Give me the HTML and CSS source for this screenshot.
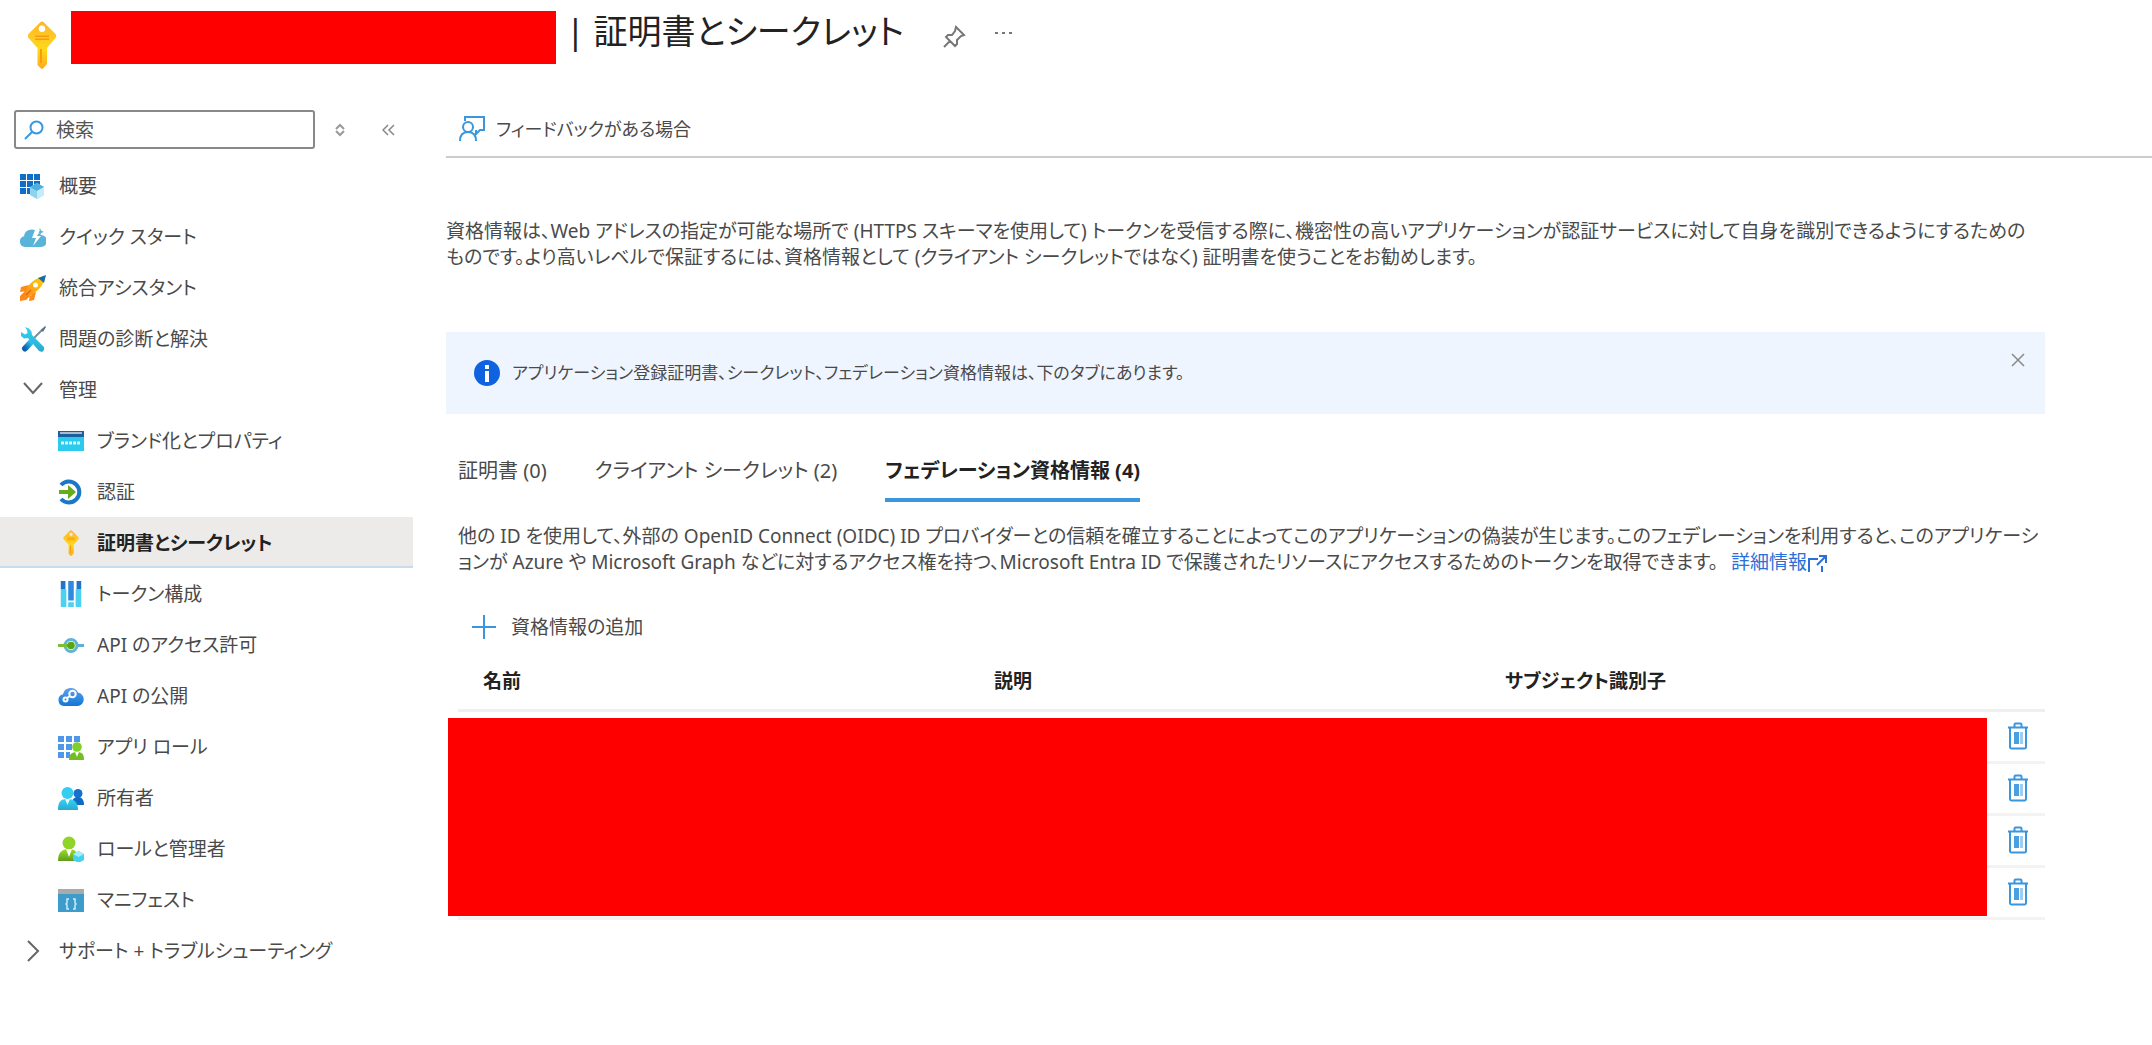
FILE: index.html
```html
<!DOCTYPE html>
<html lang="ja">
<head>
  <meta charset="UTF-8">
  <meta name="viewport" content="width=device-width, initial-scale=1.0">
  <title>証明書とシークレット</title>
  <link rel="stylesheet" href="styles.css">
</head>
<body>

  <!-- Shared icons and gradients -->
  <svg class="defs" aria-hidden="true">
    <defs>
      <linearGradient id="gold" x1="0" y1="0" x2="0" y2="1">
        <stop offset="0" stop-color="#ffb52b" />
        <stop offset="0.6" stop-color="#ffd91a" />
        <stop offset="1" stop-color="#ffab1a" />
      </linearGradient>
      <linearGradient id="blue" x1="0" y1="0" x2="0" y2="1">
        <stop offset="0" stop-color="#5ea0ef" />
        <stop offset="1" stop-color="#0f78d4" />
      </linearGradient>
      <linearGradient id="cyan" x1="0" y1="0" x2="0" y2="1">
        <stop offset="0" stop-color="#32d4f5" />
        <stop offset="1" stop-color="#2aa9cf" />
      </linearGradient>
      <linearGradient id="green" x1="0" y1="0" x2="0" y2="1">
        <stop offset="0" stop-color="#9be02a" />
        <stop offset="1" stop-color="#5e9d1c" />
      </linearGradient>
      <linearGradient id="tool" x1="1" y1="0" x2="0" y2="1">
        <stop offset="0" stop-color="#32d4f5" />
        <stop offset="1" stop-color="#0b62b0" />
      </linearGradient>
      <linearGradient id="fire" x1="1" y1="0" x2="0" y2="1">
        <stop offset="0" stop-color="#ffd70f" />
        <stop offset="1" stop-color="#fb8a1a" />
      </linearGradient>
    </defs>
    <symbol id="key" viewBox="0 0 28 48">
      <path fill="url(#gold)" fill-rule="evenodd" d="M12 1.500a3 3 0 0 1 4 0l11 11a3.500 3.500 0 0 1 0 5L19 27v16l-3.500 4a2 2 0 0 1-3 0L9.500 44V27L1 17.500a3.500 3.500 0 0 1 0-5zM14 4.500a3.200 3.200 0 1 0 0 6.400a3.200 3.200 0 1 0 0-6.400z" />
      <path fill="#f59d10" d="M7 14.500h14v1.600H7zM7 17.500h14v1.600H7zM12 28h2v14h-2z" />
    </symbol>
    <symbol id="trash" viewBox="0 0 22 28">
      <path fill="none" stroke="#3a96dd" stroke-width="2" d="M1 5.500h20M3 6v19a1.500 1.500 0 0 0 1.500 1.500h13A1.500 1.500 0 0 0 19 25V6M7.500 5V2.500A1 1 0 0 1 8.500 1.500h5a1 1 0 0 1 1 1V5" />
      <path fill="#4a9fe0" d="M7 10h5v12H7z" />
      <path fill="#9fcdf0" d="M13 10h3v12h-3z" />
    </symbol>
  </svg>

  <!-- Page title -->
  <header class="header">
    <svg class="header-key" aria-hidden="true"><use href="#key" /></svg>
    <span class="masked-name"></span>
    <h1>| 証明書とシークレット</h1>
    <button type="button" class="icon-btn pin" aria-label="ピン留め">
      <svg width="24" height="24" viewBox="0 0 24 24" fill="none" stroke="#777" stroke-width="2"><path d="M14 2l8 8-3 1-4 4v4l-2 2-9-9 2-2h4l3-4zM8 16l-6 6" /></svg>
    </button>
    <button type="button" class="icon-btn more" aria-label="その他">
      <svg width="20" height="4" viewBox="0 0 20 4" fill="#777"><path d="M1 1h3v2H1zM8 1h3v2H8zM15 1h3v2h-3z" /></svg>
    </button>
  </header>

  <div class="layout">

    <!-- Left menu -->
    <aside class="sidebar">
      <div class="search-row">
        <label class="search">
          <svg width="20" height="20" viewBox="0 0 20 20" fill="none" stroke="#3a96dd" stroke-width="2"><circle cx="12.500" cy="7.500" r="6" /><path d="M8 12l-7 7" /></svg>
          <input type="text" placeholder="検索" aria-label="検索">
        </label>
        <button type="button" class="icon-btn" aria-label="並べ替え">
          <svg width="12" height="14" viewBox="0 0 12 14" fill="none" stroke="#999" stroke-width="2"><path d="M2 6l4-4 4 4M2 8l4 4 4-4" /></svg>
        </button>
        <button type="button" class="icon-btn collapse" aria-label="折りたたむ">
          <svg width="13" height="12" viewBox="0 0 13 12" fill="none" stroke="#888" stroke-width="1.500"><path d="M6 1L1 6l5 5M12 1L7 6l5 5" /></svg>
        </button>
      </div>

      <nav class="menu">
        <a href="#">
          <svg viewBox="0 0 26 26"><path fill="#0f6fc8" d="M0 1h6v6H0zM7 1h6v6H7zM14 1h6v6h-6zM0 8h6v6H0zM7 8h6v6H7zM14 8h6v6h-6zM0 15h6v6H0zM7 15h6v6H7z" /><path fill="#8ed3ee" d="M17 10l7 4v8l-7 4-7-4v-8z" /><path fill="#4fb0dc" d="M10 14l7 4 7-4-7-4z" /><path fill="#c3ebf8" d="M17 18l7-4v8l-7 4z" /></svg>
          <span>概要</span>
        </a>
        <a href="#">
          <svg viewBox="0 0 26 26"><path fill="#59b4d9" d="M5 23a5.500 5.500 0 0 1-1-10.800A7.500 7.500 0 0 1 18 9.500a7 7 0 0 1 3 1.500 6 6 0 0 1 0 12z" /><path fill="#59b4d9" d="M20 4l1 2.500L24 8l-3 1-1 3-1-3-2-1 2-1.500z" /><path fill="#fff" d="M15 6l-3 8h4l-3 8 8-10h-4l3-6z" /></svg>
          <span>クイック スタート</span>
        </a>
        <a href="#">
          <svg viewBox="0 0 26 26"><path fill="#fb8a1a" d="M9 10L1 12l-1 5 7-1zM16 17l-2 8-5 1 1-7zM6 15l-6 6v5l6-1 6-6z" /><path fill="url(#fire)" d="M5 17C9 8 15 3 25 1c-1 10-8 16-16 20z" /><path fill="#1a6aa8" d="M18 3l8-3-2 8z" /><circle cx="15.500" cy="10" r="2.500" fill="#fff" /><path stroke="#e56a10" stroke-width="1.500" d="M11 15l-5 5" /></svg>
          <span>統合アシスタント</span>
        </a>
        <a href="#">
          <svg viewBox="0 0 26 26"><path stroke="#7d8b96" stroke-width="2" d="M23 3l-9 9" /><path fill="#5a7184" d="M25 0l1 1-3 5-2-2z" /><path stroke="url(#tool)" stroke-width="6" stroke-linecap="round" d="M12 15l-7 7.500" /><path fill="url(#cyan)" d="M5 1l4 1.500 2.500 3L12 9l12 12v3l-2 2-3-1L8 12l-4 .500L1 10 1 6l4 2.500L7.500 7 7 4z" /></svg>
          <span>問題の診断と解決</span>
        </a>
        <a href="#">
          <svg viewBox="0 0 26 26"><path fill="none" stroke="#666" stroke-width="2" d="M4 6l9 10 9-10" /></svg>
          <span>管理</span>
        </a>
        <a href="#" class="child">
          <svg viewBox="0 0 26 26"><path fill="#2ccbee" d="M0 7h26v16H0z" /><path fill="#1b5f9e" d="M0 3h26v6H0z" /><path fill="#a9bccd" d="M2 4h22v2H2z" /><path stroke="#d8f6fd" stroke-width="3" stroke-dasharray="3 1" d="M3 15h19" /></svg>
          <span>ブランド化とプロパティ</span>
        </a>
        <a href="#" class="child">
          <svg viewBox="0 0 26 26"><path fill="none" stroke="#1a78c8" stroke-width="4" d="M3 6a10.500 10.500 0 1 1 0 14" /><path fill="#66ad1e" d="M1 11h9V6l8 7-8 7v-5H1z" /></svg>
          <span>認証</span>
        </a>
        <a href="#" class="child selected" aria-current="page">
          <svg><use href="#key" /></svg>
          <span>証明書とシークレット</span>
        </a>
        <a href="#" class="child">
          <svg viewBox="0 0 26 28"><path fill="#4cd1ef" d="M2 9h6v19H2zM18 9h6v19h-6zM10 23h6v5h-6z" /><path fill="#1f74cc" d="M2 0h5v9H2zM19 0h5v9h-5z" /><path fill="#2f8be0" d="M10 0h6v21h-6z" /></svg>
          <span>トークン構成</span>
        </a>
        <a href="#" class="child">
          <svg viewBox="0 0 26 26"><path fill="#59b0d8" d="M18 12h8v3h-8z" /><circle cx="13" cy="13.500" r="6" fill="#fff" stroke="#62b3d8" stroke-width="3" /><path fill="#7cbf32" d="M0 12h12v3H0z" /><circle cx="13" cy="13.500" r="3.800" fill="#58a516" /></svg>
          <span>API のアクセス許可</span>
        </a>
        <a href="#" class="child">
          <svg viewBox="0 0 26 26"><path fill="url(#blue)" d="M6 23a6 6 0 0 1-1-11.800A8 8 0 0 1 20 9.500 6.800 6.800 0 0 1 19.500 23z" /><g fill="none" stroke="#fff" stroke-width="2"><circle cx="14.500" cy="11" r="3.200" /><circle cx="7.500" cy="16.500" r="2" /><path d="M9 15l3-2" /></g></svg>
          <span>API の公開</span>
        </a>
        <a href="#" class="child">
          <svg viewBox="0 0 26 26"><path fill="#4f97ea" d="M0 2h6v6H0zM8 2h6v6H8zM16 2h6v6h-6zM0 10h6v6H0zM8 10h6v6H8zM0 18h6v6H0zM8 18h4v6H8z" /><circle cx="19" cy="13" r="4.800" fill="#7fd02a" /><path fill="#74bd22" d="M11 26c0-6 3-8 8-8s7 2 7 8z" /><path fill="#fff" d="M17 18h4l-2 5z" /></svg>
          <span>アプリ ロール</span>
        </a>
        <a href="#" class="child">
          <svg viewBox="0 0 26 26"><circle cx="20" cy="8.500" r="4.500" fill="#1571cc" /><path fill="#0f6cc4" d="M14 20c0-6 2-8 6-8s6 3 6 8z" /><circle cx="9.500" cy="8" r="6" fill="#35cdf0" /><path fill="url(#cyan)" d="M0 25c0-9 3-11 9.500-11S20 17 20 25z" /><path fill="#e4f8fd" d="M7 14h5l-2.500 6z" /></svg>
          <span>所有者</span>
        </a>
        <a href="#" class="child">
          <svg viewBox="0 0 26 26"><circle cx="11" cy="7" r="6.500" fill="#90d42a" /><path fill="url(#green)" d="M0 25c0-9 4-12 11-12s9 4 9 12z" /><path fill="#fff" d="M8 13h6l-3 8z" /><path fill="#45d2ee" d="M20.500 15l5.500 3v6l-5.500 3L15 24v-6z" /><path fill="#a6edfa" d="M20.500 21l5.500-3-5.500-3-5.500 3z" /></svg>
          <span>ロールと管理者</span>
        </a>
        <a href="#" class="child">
          <svg viewBox="0 0 26 26"><path fill="#3d9cc9" d="M0 7h26v18H0z" /><path fill="#aaa" d="M0 2h26v5H0z" /><path fill="none" stroke="#cdeaf6" stroke-width="1.500" d="M11 12H9v4l-1 1 1 1v4h2M15 12h2v4l1 1-1 1v4h-2" /></svg>
          <span>マニフェスト</span>
        </a>
        <a href="#">
          <svg viewBox="0 0 26 26"><path fill="none" stroke="#666" stroke-width="2" d="M8 3l10 10L8 23" /></svg>
          <span>サポート + トラブルシューティング</span>
        </a>
      </nav>
    </aside>

    <!-- Main content -->
    <main class="content">
      <div class="toolbar">
        <button type="button" class="command feedback">
          <svg width="26" height="26" viewBox="0 0 26 26" fill="none" stroke="#3a96dd" stroke-width="2"><path d="M6 5V1h19v13h-4l-4 4v-4" /><circle cx="9" cy="11" r="5" /><path d="M1 25c0-6 3-9 8-9s8 3 8 9" /></svg>
          フィードバックがある場合
        </button>
      </div>

      <div class="page">
        <p class="intro">資格情報は、Web アドレスの指定が可能な場所で (HTTPS スキーマを使用して) トークンを受信する際に、機密性の高いアプリケーションが認証サービスに対して自身を識別できるようにするための<br>ものです。より高いレベルで保証するには、資格情報として (クライアント シークレットではなく) 証明書を使うことをお勧めします。</p>

        <div class="banner">
          <svg width="26" height="26" viewBox="0 0 26 26"><circle cx="13" cy="13" r="13" fill="#0f62e0" /><path fill="#fff" d="M11 5h4v4h-4zM11 11h4v11h-4z" /></svg>
          <span>アプリケーション登録証明書、シークレット、フェデレーション資格情報は、下のタブにあります。</span>
          <button type="button" class="icon-btn close" aria-label="閉じる">
            <svg width="14" height="14" viewBox="0 0 14 14" fill="none" stroke="#888" stroke-width="1.500"><path d="M1 1l12 12M13 1L1 13" /></svg>
          </button>
        </div>

        <div class="panel">
          <div class="tabs" role="tablist">
            <button type="button" role="tab">証明書 (0)</button>
            <button type="button" role="tab">クライアント シークレット (2)</button>
            <button type="button" role="tab" class="active" aria-selected="true">フェデレーション資格情報 (4)</button>
          </div>

          <p class="about">他の ID を使用して、外部の OpenID Connect (OIDC) ID プロバイダーとの信頼を確立することによってこのアプリケーションの偽装が生じます。このフェデレーションを利用すると、このアプリケーシ<br>ョンが Azure や Microsoft Graph などに対するアクセス権を持つ、Microsoft Entra ID で保護されたリソースにアクセスするためのトークンを取得できます。 <a href="#">詳細情報<svg width="20" height="18" viewBox="0 0 20 18" fill="none" stroke="#2b70d8" stroke-width="2"><path d="M8 4H2v13M15 11v6M12 1h7v7M19 1l-9 9M8 4h3" /></svg></a></p>

          <button type="button" class="command add">
            <svg width="24" height="26" viewBox="0 0 24 26" fill="none" stroke="#3a96dd" stroke-width="2"><path d="M12 1v24M0 13h24" /></svg>
            資格情報の追加
          </button>

          <div class="table-wrap">
            <table>
              <thead>
                <tr><th>名前</th><th>説明</th><th>サブジェクト識別子</th><th class="actions"></th></tr>
              </thead>
              <tbody>
                <tr><td></td><td></td><td></td><td><button type="button" class="icon-btn" aria-label="削除"><svg width="22" height="28"><use href="#trash" /></svg></button></td></tr>
                <tr><td></td><td></td><td></td><td><button type="button" class="icon-btn" aria-label="削除"><svg width="22" height="28"><use href="#trash" /></svg></button></td></tr>
                <tr><td></td><td></td><td></td><td><button type="button" class="icon-btn" aria-label="削除"><svg width="22" height="28"><use href="#trash" /></svg></button></td></tr>
                <tr><td></td><td></td><td></td><td><button type="button" class="icon-btn" aria-label="削除"><svg width="22" height="28"><use href="#trash" /></svg></button></td></tr>
              </tbody>
            </table>
            <div class="masked-rows"></div>
          </div>
        </div>
      </div>
    </main>
  </div>

</body>
</html>
```
FILE: styles.css
```css
* {
  box-sizing: border-box;
}

body {
  margin: 0;
  background-color: #fff;
  color: #4a4a4a;
  font-family: "Noto Sans", "Noto Sans CJK JP", sans-serif;
  font-feature-settings: "palt";
  font-size: 19px;
  line-height: 26px;
}

button,
input {
  font: inherit;
  font-feature-settings: inherit;
  color: inherit;
}

button {
  padding: 0;
  border: none;
  background: none;
  cursor: pointer;
}

a {
  color: inherit;
  text-decoration: none;
}

.defs {
  position: absolute;
  width: 0;
  height: 0;
}

.icon-btn {
  display: flex;
  align-items: center;
  justify-content: center;
}

/* Page title */
.header {
  display: flex;
  align-items: center;
  height: 108px;
  padding: 0 28px 34px;
}

.header-key {
  width: 28px;
  height: 48px;
  margin: 16px 15px 0 0;
}

.masked-name {
  width: 485px;
  height: 53px;
  background-color: #f00;
}

h1 {
  margin: 0 0 12px 10px;
  color: #222;
  font-size: 34px;
  font-weight: 400;
  line-height: 48px;
}

.pin {
  margin: 0 28px 0 38px;
}

.more {
  margin-bottom: 8px;
}

/* Left menu */
.layout {
  display: flex;
}

.sidebar {
  width: 413px;
  flex-shrink: 0;
}

.search-row {
  display: flex;
  align-items: center;
  height: 52px;
  padding: 0 0 9px 14px;
}

.search {
  display: flex;
  align-items: center;
  gap: 12px;
  width: 301px;
  height: 39px;
  margin-right: 19px;
  padding: 0 8px;
  border: 2px solid #8a8886;
  border-radius: 3px;
}

.search svg {
  flex-shrink: 0;
}

.search input {
  width: 100%;
  padding: 0;
  border: none;
  outline: none;
  background: none;
}

.search input::placeholder {
  color: #555;
  opacity: 1;
}

.collapse {
  margin-left: 36px;
}

.menu a {
  display: flex;
  align-items: center;
  gap: 13px;
  height: 51px;
  padding-left: 20px;
}

.menu a svg {
  width: 26px;
  height: 26px;
  flex-shrink: 0;
}

.menu .child {
  padding-left: 58px;
}

.menu .selected {
  background-color: #edebe9;
  box-shadow: inset 0 -2px #c7dcee;
  color: #222;
  font-weight: 700;
}

/* Main content */
.content {
  flex: 1;
  min-width: 0;
  padding-left: 33px;
}

.toolbar {
  display: flex;
  align-items: center;
  height: 50px;
  padding: 0 0 6px 13px;
  border-bottom: 2px solid #ccc;
}

.command {
  display: flex;
  align-items: center;
  gap: 11px;
}

.feedback {
  font-size: 18px;
}

.page {
  padding: 60px 107px 0 0;
}

.intro,
.about {
  margin: 0;
  white-space: nowrap;
}

.banner {
  display: flex;
  align-items: center;
  gap: 12px;
  height: 82px;
  margin-top: 62px;
  padding: 0 20px 0 28px;
  background-color: #eff5fe;
  font-size: 17px;
}

.close {
  margin: 0 0 26px auto;
}

.panel {
  padding-left: 12px;
}

.tabs {
  display: flex;
  gap: 48px;
  margin-top: 44px;
  font-size: 20px;
}

.tabs button {
  height: 44px;
  padding-bottom: 14px;
  border-bottom: 4px solid transparent;
}

.tabs .active {
  border-color: #3a96dd;
  color: #222;
  font-weight: 700;
}

.about {
  margin-top: 21px;
}

.about a {
  margin-left: 8px;
  color: #2b70d8;
}

.about svg {
  vertical-align: middle;
}

.add {
  margin: 39px 0 0 14px;
  gap: 15px;
}

/* Credentials table */
.table-wrap {
  position: relative;
}

table {
  width: 100%;
  margin-top: 14px;
  border-collapse: collapse;
  table-layout: fixed;
}

th {
  height: 56px;
  padding: 0 0 0 25px;
  border-bottom: 3px solid #f0efee;
  color: #222;
  text-align: left;
}

.actions {
  width: 54px;
}

td {
  height: 52px;
  padding: 0 16px;
  border-bottom: 3px solid #f4f3f2;
}

.masked-rows {
  position: absolute;
  top: 64px;
  right: 58px;
  bottom: 4px;
  left: -10px;
  background-color: #f00;
}
```
